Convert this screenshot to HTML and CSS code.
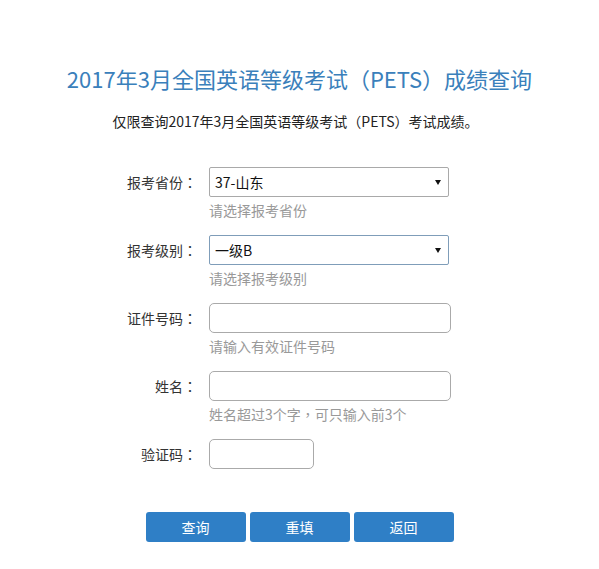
FILE: index.html
```html
<!DOCTYPE html>
<html lang="zh-CN">
<head>
    <meta charset="UTF-8">
    <meta name="viewport" content="width=device-width, initial-scale=1.0">
    <title>PETS成绩查询</title>
    <link rel="stylesheet" href="styles.css">
</head>
<body>
    <div class="page">
        <h1 class="title">2017年3月全国英语等级考试（PETS）成绩查询</h1>
        <p class="notice">仅限查询2017年3月全国英语等级考试（PETS）考试成绩。</p>
        <form class="query-form" id="queryForm">
            <div class="form-row">
                <label for="province">报考省份<span class="colon" lang="zh-TW">：</span></label>
                <div class="field">
                    <div class="select-wrap">
                        <select id="province" name="province">
                            <option>37-山东</option>
                        </select>
                    </div>
                    <div class="help">请选择报考省份</div>
                </div>
            </div>
            <div class="form-row">
                <label for="level">报考级别<span class="colon" lang="zh-TW">：</span></label>
                <div class="field">
                    <div class="select-wrap">
                        <select id="level" name="level" class="focused">
                            <option>一级B</option>
                        </select>
                    </div>
                    <div class="help">请选择报考级别</div>
                </div>
            </div>
            <div class="form-row">
                <label for="idno">证件号码<span class="colon" lang="zh-TW">：</span></label>
                <div class="field">
                    <input type="text" id="idno" name="idno">
                    <div class="help">请输入有效证件号码</div>
                </div>
            </div>
            <div class="form-row">
                <label for="name">姓名<span class="colon" lang="zh-TW">：</span></label>
                <div class="field">
                    <input type="text" id="name" name="name">
                    <div class="help">姓名超过3个字<span class="colon" lang="zh-TW">，</span>可只输入前3个</div>
                </div>
            </div>
            <div class="form-row last">
                <label for="code">验证码<span class="colon" lang="zh-TW">：</span></label>
                <div class="field">
                    <input type="text" id="code" name="code" class="short">
                </div>
            </div>
            <div class="buttons">
                <button type="submit">查询</button>
                <button type="reset">重填</button>
                <button type="button">返回</button>
            </div>
        </form>
    </div>
</body>
</html>
```

FILE: styles.css
```css
body {
    font-family: "Microsoft YaHei", "Noto Sans CJK SC", sans-serif;
    background-color: #ffffff;
    color: #333;
    margin: 0;
    text-spacing-trim: space-all;
}
.page {
    width: 599px;
    padding-top: 63px;
}
.title {
    color: #3a80bb;
    font-size: 22px;
    font-weight: normal;
    line-height: 30px;
    text-align: center;
    margin: 0;
}
.notice {
    font-size: 14px;
    line-height: 20px;
    text-align: center;
    margin: 18px 0 0 -8px;
    color: #222;
}
.query-form {
    margin-top: 36px;
}
.form-row {
    display: flex;
    align-items: flex-start;
    margin-bottom: 18px;
}
.form-row.last {
    margin-bottom: 43px;
}
.form-row label {
    width: 197px;
    text-align: right;
    font-size: 14px;
    line-height: 30px;
    color: #333;
    margin-right: 12px;
}
.colon {
    font-family: "Noto Sans CJK TC", sans-serif;
}
.field {
    display: flex;
    flex-direction: column;
}
.help {
    color: #999;
    font-size: 14px;
    line-height: 20px;
    margin-top: 3px;
    margin-bottom: -3px;
}
.select-wrap {
    position: relative;
    width: 240px;
}
.select-wrap::after {
    content: "";
    position: absolute;
    right: 8px;
    top: 13px;
    border-left: 3.5px solid transparent;
    border-right: 3.5px solid transparent;
    border-top: 5px solid #111;
    pointer-events: none;
}
select {
    appearance: none;
    -webkit-appearance: none;
    width: 240px;
    height: 30px;
    padding: 0 20px 0 5px;
    border: 1px solid #a9a9a9;
    border-radius: 2px;
    background-color: #fff;
    font-family: inherit;
    font-size: 14px;
    color: #111;
    box-sizing: border-box;
}
select.focused {
    border-color: #7f9db9;
}
input[type="text"] {
    width: 242px;
    height: 30px;
    border: 1px solid #aaa;
    border-radius: 5px;
    box-sizing: border-box;
    padding: 0 6px;
    font-family: inherit;
    font-size: 14px;
}
input[type="text"].short {
    width: 105px;
}
.buttons {
    display: flex;
    justify-content: center;
    gap: 4px;
}
button {
    width: 100px;
    height: 30px;
    background-color: #2f7fc6;
    color: #ffffff;
    border: none;
    border-radius: 3px;
    font-family: inherit;
    font-size: 14px;
    cursor: pointer;
}
button:hover {
    background-color: #286fae;
}
```
